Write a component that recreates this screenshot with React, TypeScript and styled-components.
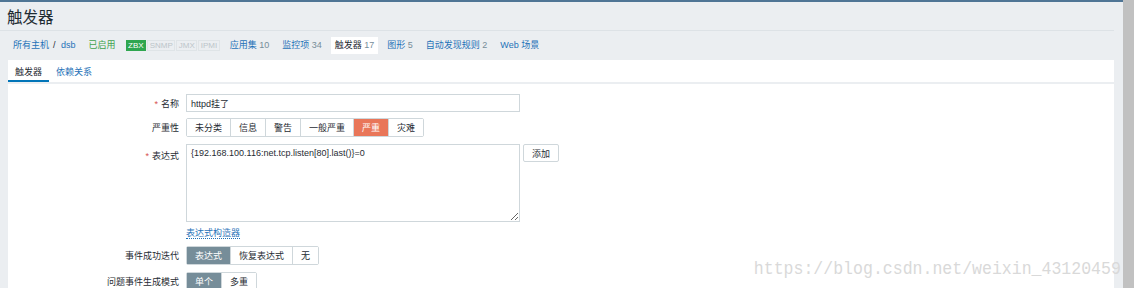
import React from 'react'
import styled, { createGlobalStyle } from 'styled-components'

const GlobalStyle = createGlobalStyle`
  html, body {
    margin: 0;
    padding: 0;
  }
  body {
    width: 1134px;
    height: 288px;
    overflow: hidden;
    background: #ebeef1;
    font-family: "Liberation Sans", "Noto Sans CJK SC", sans-serif;
    font-size: 9px;
    color: #1f2c33;
  }
`

const Screen = styled.div`
  position: relative;
  display: flex;
  height: 288px;
  overflow: hidden;
`

const Main = styled.div`
  flex: none;
  width: 1123px;
  height: 288px;
  box-sizing: border-box;
  border-top: 2px solid #4f7595;
`

const Scrollbar = styled.div`
  flex: 1;
  background: #c1c1c1;
`

const Header = styled.header`
  width: 1114px;
  height: 29px;
  box-sizing: border-box;
  padding-left: 7px;
  display: flex;
  align-items: center;
  border-bottom: 1px solid #dde2e6;
`

const Title = styled.h1`
  margin: 0;
  font-size: 15.5px;
  font-weight: normal;
  color: #1f2c33;
`

const Nav = styled.nav`
  height: 29px;
  padding-left: 9px;
  display: flex;
  align-items: center;
  gap: 5px;
`

const NavItem = styled.span<{ $active?: boolean }>`
  padding: 4px;
  line-height: 9px;
  white-space: nowrap;
  color: ${p => (p.$active ? '#1f2c33' : '#1f72b8')};
  background: ${p => (p.$active ? '#ffffff' : 'transparent')};
`

const Count = styled.span`
  color: #768d99;
`

const Sep = styled.span`
  color: #1f2c33;
  margin: 0 5.5px 0 4px;
`

const Enabled = styled(NavItem)`
  color: #3fa34d;
`

const Badges = styled.span`
  display: flex;
  gap: 1px;
  margin: 0 1px 0 1px;
`

const Badge = styled.span<{ $on?: boolean }>`
  height: 11.5px;
  line-height: 10px;
  padding: 0 1.5px;
  box-sizing: border-box;
  font-size: 8px;
  border: 1px solid ${p => (p.$on ? '#2fa64f' : '#dfe4e7')};
  background: ${p => (p.$on ? '#2fa64f' : '#ebeef1')};
  color: ${p => (p.$on ? '#ffffff' : '#bcc5ca')};
`

const Panel = styled.section`
  margin: 0 9px 0 8px;
  height: 240px;
  background: #ffffff;
`

const TabBar = styled.div`
  display: flex;
  height: 22px;
  border-bottom: 2px solid #ebeef1;
`

const Tab = styled.span<{ $active?: boolean }>`
  display: flex;
  align-items: center;
  padding: 0 7px;
  color: ${p => (p.$active ? '#1f2c33' : '#1f72b8')};
  box-shadow: ${p => (p.$active ? 'inset 0 -2px 0 #0275b8' : 'none')};
`

const Form = styled.div`
  padding-top: 10px;
`

const Row = styled.div<{ $top?: boolean; $gap?: number }>`
  display: flex;
  align-items: ${p => (p.$top ? 'flex-start' : 'center')};
  margin-bottom: ${p => (p.$gap ?? 7)}px;
`

const Label = styled.label<{ $top?: boolean }>`
  flex: none;
  width: 171px;
  margin-right: 7px;
  text-align: right;
  white-space: nowrap;
  padding-top: ${p => (p.$top ? '5px' : '0')};
`

const Req = styled.span`
  color: #d64e4e;
  margin-right: 3px;
`

const TextInput = styled.input`
  width: 334px;
  height: 18px;
  box-sizing: border-box;
  border: 1px solid #cfd7db;
  padding: 0 4px;
  font: inherit;
  color: #1f2c33;
  outline: none;
`

const TextArea = styled.textarea`
  width: 334px;
  height: 78px;
  box-sizing: border-box;
  border: 1px solid #cfd7db;
  padding: 3px 4px;
  font: inherit;
  color: #1f2c33;
  outline: none;
`

const Button = styled.button`
  margin-left: 3px;
  height: 18px;
  padding: 0 8px;
  border: 1px solid #cfd7db;
  border-radius: 2px;
  background: #ffffff;
  font: inherit;
  color: #1f2c33;
`

const LinkRow = styled.div`
  padding-left: 178px;
  height: 12px;
  margin-bottom: 8px;
`

const DashLink = styled.span`
  color: #1f72b8;
  border-bottom: 1px dotted #1f72b8;
`

const Segments = styled.div`
  display: inline-flex;
  height: 19px;
  box-sizing: border-box;
  border: 1px solid #cfd7db;
  border-radius: 2px;
`

const Segment = styled.span<{ $bg?: string }>`
  display: flex;
  align-items: center;
  padding: 0 8px;
  white-space: nowrap;
  background: ${p => p.$bg ?? '#ffffff'};
  color: ${p => (p.$bg ? '#ffffff' : '#1f2c33')};
  & + & {
    border-left: 1px solid #cfd7db;
  }
`

const Watermark = styled.div`
  position: absolute;
  right: 13px;
  top: 260px;
  font-family: "Liberation Mono", monospace;
  font-size: 19px;
  line-height: 19px;
  color: #d9d9d9;
  transform: scaleX(0.87);
  transform-origin: right center;
  white-space: nowrap;
  pointer-events: none;
`

const severities = ['未分类', '信息', '警告', '一般严重', '严重', '灾难']

export default function App() {
  return (
    <Screen>
      <GlobalStyle />
      <Main>
        <Header>
          <Title>触发器</Title>
        </Header>
        <Nav>
          <NavItem>
            所有主机<Sep>/</Sep>dsb
          </NavItem>
          <Enabled>已启用</Enabled>
          <Badges>
            <Badge $on>ZBX</Badge>
            <Badge>SNMP</Badge>
            <Badge>JMX</Badge>
            <Badge>IPMI</Badge>
          </Badges>
          <NavItem>应用集 <Count>10</Count></NavItem>
          <NavItem>监控项 <Count>34</Count></NavItem>
          <NavItem $active>触发器 <Count>17</Count></NavItem>
          <NavItem>图形 <Count>5</Count></NavItem>
          <NavItem>自动发现规则 <Count>2</Count></NavItem>
          <NavItem>Web 场景</NavItem>
        </Nav>
        <Panel>
          <TabBar>
            <Tab $active>触发器</Tab>
            <Tab>依赖关系</Tab>
          </TabBar>
          <Form>
            <Row $gap={6}>
              <Label><Req>*</Req>名称</Label>
              <TextInput defaultValue="httpd挂了" />
            </Row>
            <Row>
              <Label>严重性</Label>
              <Segments>
                {severities.map(s => (
                  <Segment key={s} $bg={s === '严重' ? '#e97659' : undefined}>{s}</Segment>
                ))}
              </Segments>
            </Row>
            <Row $top $gap={4}>
              <Label $top><Req>*</Req>表达式</Label>
              <TextArea defaultValue="{192.168.100.116:net.tcp.listen[80].last()}=0" />
              <Button>添加</Button>
            </Row>
            <LinkRow>
              <DashLink>表达式构造器</DashLink>
            </LinkRow>
            <Row>
              <Label>事件成功迭代</Label>
              <Segments>
                <Segment $bg="#768d99">表达式</Segment>
                <Segment>恢复表达式</Segment>
                <Segment>无</Segment>
              </Segments>
            </Row>
            <Row>
              <Label>问题事件生成模式</Label>
              <Segments>
                <Segment $bg="#768d99">单个</Segment>
                <Segment>多重</Segment>
              </Segments>
            </Row>
          </Form>
        </Panel>
      </Main>
      <Scrollbar />
      <Watermark>https://blog.csdn.net/weixin_43120459</Watermark>
    </Screen>
  )
}
